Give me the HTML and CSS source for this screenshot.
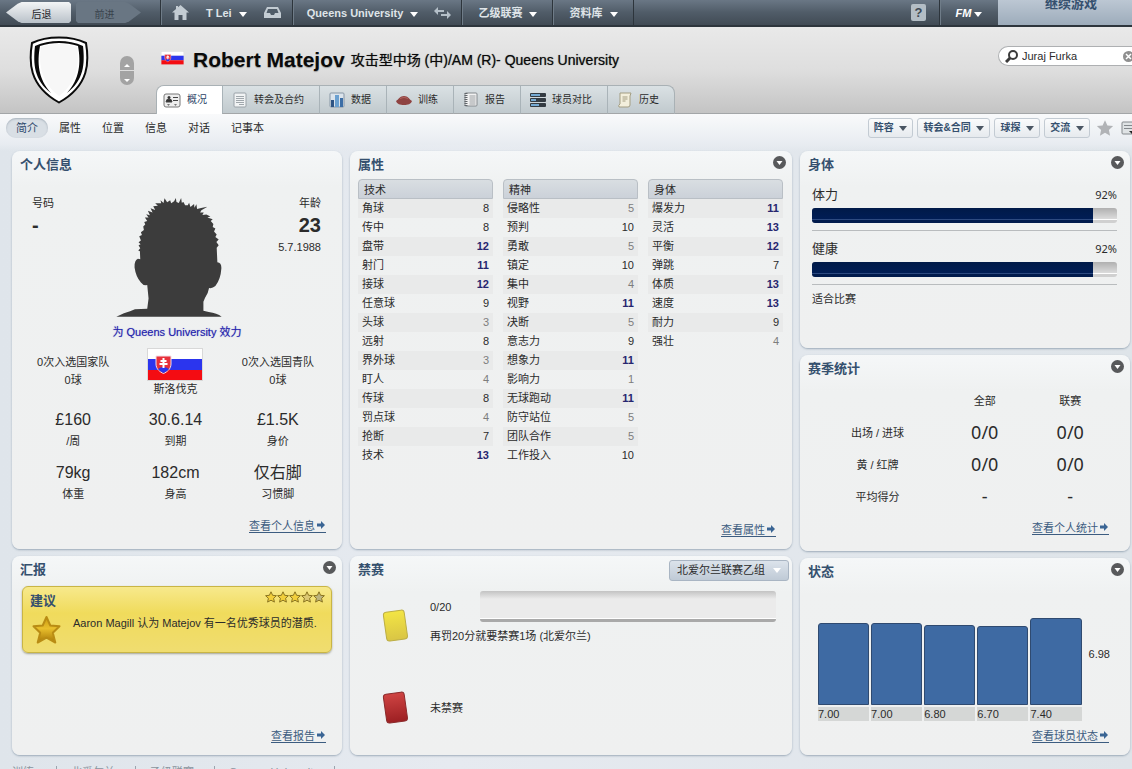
FILE: index.html
```html
<!DOCTYPE html>
<html lang="zh-CN">
<head>
  <meta charset="UTF-8">
  <meta name="viewport" content="width=device-width, initial-scale=1.0">
  <title>Robert Matejov - 概况</title>
  <link rel="stylesheet" href="styles.css">
</head>
<body>
  <!-- shared shapes -->
  <svg class="defs" width="0" height="0" aria-hidden="true">
    <defs>
      <linearGradient id="gold" x1="0" y1="0" x2="0" y2="1">
        <stop offset="0" stop-color="#c99a10"/>
        <stop offset="0.45" stop-color="#e9bf2c"/>
        <stop offset="1" stop-color="#a87806"/>
      </linearGradient>
      <linearGradient id="yellowCard" x1="0" y1="0" x2="0" y2="1">
        <stop offset="0" stop-color="#f3e544"/>
        <stop offset="1" stop-color="#d9c545"/>
      </linearGradient>
      <linearGradient id="redCard" x1="0" y1="0" x2="0" y2="1">
        <stop offset="0" stop-color="#cf4443"/>
        <stop offset="1" stop-color="#9c1f22"/>
      </linearGradient>
      <symbol id="flag" viewBox="0 0 56 33">
        <rect width="56" height="33" fill="#d8d8d8"/>
        <rect x="1" y="1" width="54" height="10" fill="#fff"/>
        <rect x="1" y="11" width="54" height="11" fill="#2b35ee"/>
        <rect x="1" y="22" width="54" height="10" fill="#f40c12"/>
        <path d="M9 8h15v8c0 5-4 8-7.500 9.500C13 24 9 21 9 16z" fill="#e8303a" stroke="#f3dfe6"/>
        <path d="M11 21q5-4 11 0-2 2.500-5.500 4Q13 23.500 11 21z" fill="#2b35ee"/>
        <path d="M16.500 10v10M13.500 13h6M12.500 16h8" stroke="#fff" stroke-width="2"/>
      </symbol>
      <symbol id="star" viewBox="0 0 12 12">
        <path d="M6 .8l1.600 3.500 3.800.4-2.800 2.600.8 3.800L6 9.200l-3.400 1.900.8-3.800L.6 4.700l3.800-.4z"/>
      </symbol>
      <symbol id="more" viewBox="0 0 13 13">
        <circle cx="6.500" cy="6.500" r="6.500" fill="#58595b"/>
        <path d="M3.500 5h6l-3 4z" fill="#fff"/>
      </symbol>
      <symbol id="arrow" viewBox="0 0 8 8">
        <path d="M0 2.500h4V0l4 4-4 4V5.500H0z" fill="#3a6594"/>
      </symbol>
    </defs>
  </svg>

  <nav class="topbar">
    <div class="history">
      <button type="button" class="back">后退</button>
      <button type="button" class="forward" disabled>前进</button>
    </div>
    <div class="menu menu-user">
      <svg width="17" height="15" viewBox="0 0 17 15"><path d="M8.500 0L17 7.500h-2.500V15h-4v-5h-4v5h-4V7.500H0L4 4V1h2v1.200z" fill="#c3ccd3"/></svg>
      <button type="button">T Lei <span class="caret"></span></button>
      <svg width="17" height="11" viewBox="0 0 17 11"><path d="M3 0h11l3 6v5H0V6z" fill="#c3ccd3"/><path d="M4 2h9l1.500 4H11L10 8H7L6 6H2.500z" fill="#4f5c68"/></svg>
    </div>
    <div class="menu menu-club">
      <button type="button">Queens University <span class="caret"></span></button>
      <svg width="17" height="12" viewBox="0 0 17 12"><path d="M0 4l4-4v3h6v2H4v3zM17 8l-4-4v3H7v2h6v3z" fill="#b5c0c9"/></svg>
    </div>
    <div class="menu"><button type="button">乙级联赛 <span class="caret"></span></button></div>
    <div class="menu menu-last"><button type="button">资料库 <span class="caret"></span></button></div>
    <button type="button" class="help">?</button>
    <button type="button" class="fm"><i>FM</i> <span class="caret"></span></button>
    <button type="button" class="continue">继续游戏</button>
  </nav>

  <header class="header">
    <div class="crest">
      <svg width="62" height="68" viewBox="0 0 62 68">
        <path d="M31 1.500C40 1.500 51 3.500 58 7c3 18 4 42-27 59.500C0 49 1 25 4 7 11 3.500 22 1.500 31 1.500z" fill="#fff" stroke="#0a0a0a" stroke-width="2"/>
        <path d="M31 5c8 0 17 1.500 24 5 2 18 1 34-16 47C52 43 53 26 50 10 44 8 37 7 31 7S18 8 12 10C9 26 10 43 23 57 6 44 5 28 7 10 14 6.500 23 5 31 5z" fill="#0a0a0a"/>
        <path d="M31 8c6 0 12 1 18 3 3 18-1 36-18 49C14 47 10 29 13 11c6-2 12-3 18-3z" fill="#f7f7f7"/>
      </svg>
      <div class="stepper">
        <button type="button" aria-label="上一个"><span class="caret up"></span></button>
        <button type="button" aria-label="下一个"><span class="caret"></span></button>
      </div>
    </div>
    <div class="identity">
      <div class="title-row">
        <svg class="title-flag" width="23" height="14"><use href="#flag"/></svg>
        <h1>Robert Matejov</h1>
        <p>攻击型中场 (中)/AM (R)- Queens University</p>
        <div class="search">
          <svg width="13" height="13" viewBox="0 0 13 13"><circle cx="8" cy="5" r="4" fill="none" stroke="#3b3b3b" stroke-width="2"/><path d="M5 8l-4 4" stroke="#3b3b3b" stroke-width="3"/></svg>
          <input type="text" value="Juraj Furka" aria-label="搜索">
          <button type="button" aria-label="清除">
            <svg width="11" height="11" viewBox="0 0 11 11"><circle cx="5.500" cy="5.500" r="5.500" fill="#8f8f8f"/><path d="M3 3l5 5M8 3l-5 5" stroke="#fff" stroke-width="1.500"/></svg>
          </button>
        </div>
      </div>
      <div class="tabs">
        <a href="#" class="tab active">
          <svg width="18" height="15" viewBox="0 0 18 15"><rect x="1" y="1" width="16" height="13" rx="2" fill="#eee" stroke="#777"/><circle cx="6" cy="4.500" r="1.500" fill="#333"/><path d="M3 9q0-3 3-3t3 3zM10 4.500h5M10 7.500h5" fill="#333" stroke="#444"/><path d="M4 11h3l-1.500 2zM11 11h3l-1.500 2z" fill="#777"/></svg>
          概况</a>
        <a href="#" class="tab">
          <svg width="16" height="16" viewBox="0 0 16 16"><rect x="2" y="1" width="12" height="14" rx="1" fill="#f1f3f4" stroke="#9aa2a8"/><path d="M4 4.500h8M4 6.500h8M4 8.500h8M4 10.500h8M7 12.500h5" stroke="#a0a7ac"/></svg>
          转会及合约</a>
        <a href="#" class="tab">
          <svg width="16" height="16" viewBox="0 0 16 16"><rect x="1" y="1" width="14" height="14" rx="1" fill="#dbe4ec" stroke="#8796a5"/><path d="M2 8h3v7H2z" fill="#2f5585"/><path d="M6 3h4v12H6z" fill="#6aa0d0"/><path d="M11 6h3v9h-3z" fill="#3c6ea6"/></svg>
          数据</a>
        <a href="#" class="tab">
          <svg width="16" height="12" viewBox="0 0 16 12"><path d="M0 7C3 5 4 2 8 2s5 3 8 5c-1 3-4 4-8 4S1 10 0 7z" fill="#8f4341"/><path d="M4 4.500Q8 2 12 4.500" stroke="#b0625d" fill="none"/></svg>
          训练</a>
        <a href="#" class="tab">
          <svg width="16" height="16" viewBox="0 0 16 16"><rect x="2" y="1" width="12" height="13" rx="1" fill="#f2f2f2" stroke="#84898d"/><path d="M3 1v13" stroke="#62676b" stroke-width="3" stroke-dasharray="1 1"/><path d="M6.500 4h6M6.500 6h6M6.500 8h6M6.500 10h6M6.500 12h6" stroke="#9b9fa2"/></svg>
          报告</a>
        <a href="#" class="tab">
          <svg width="16" height="16" viewBox="0 0 16 16"><rect y="1" width="16" height="4" rx="1" fill="#333b42"/><rect y="6" width="16" height="4" rx="1" fill="#333b42"/><rect y="11" width="16" height="4" rx="1" fill="#333b42"/><path d="M1 2h9v2H1zM1 7h5v2H1zM1 12h8v2H1z" fill="#74a9d2"/></svg>
          球员对比</a>
        <a href="#" class="tab">
          <svg width="16" height="16" viewBox="0 0 16 16"><path d="M3 1h11l-1 3v9q0 2-2 2H2q-1-2 1-3z" fill="#f3efdc" stroke="#a39d82"/><path d="M5.500 5h5M5.500 7h5M5.500 9h3" stroke="#a39d82"/></svg>
          历史</a>
      </div>
    </div>
  </header>

  <div class="subnav">
    <a href="#" class="active">简介</a>
    <a href="#">属性</a>
    <a href="#">位置</a>
    <a href="#">信息</a>
    <a href="#">对话</a>
    <a href="#">记事本</a>
    <div class="actions">
      <button type="button">阵容 <span class="caret"></span></button>
      <button type="button">转会&amp;合同 <span class="caret"></span></button>
      <button type="button">球探 <span class="caret"></span></button>
      <button type="button">交流 <span class="caret"></span></button>
      <svg class="favourite" width="18" height="18" viewBox="0 0 12 12" fill="#b1b3b6"><use href="#star"/></svg>
      <svg width="11" height="14" viewBox="0 0 11 14"><path d="M11 1H2Q1 1 1 2v10q0 1 1 1h9" fill="#dfe3e5" stroke="#84898d"/><path d="M3 4.500h8M3 7.500h8" stroke="#84898d"/><path d="M8 10h3v3z" fill="#222"/></svg>
    </div>
  </div>

  <main class="dashboard">
    <div class="column split">
      <section class="panel">
        <div class="panel-head"><h2>个人信息</h2></div>
        <div class="portrait-row">
          <div class="number">
            <span>号码</span>
            <strong>-</strong>
          </div>
          <svg class="portrait" width="106" height="120" viewBox="347 155 317 361">
            <path d="M347 515L370 505Q390 499 403 493L440 491 444 460 440 420Q428 422 421 412 406 396 402 368 401 345 412 341L419 342 418 318 413 316 419 309 414 300 420 297 414 291 421 286 416 273 424 269 421 261 430 254 428 244 434 238 431 230 440 227 433 217 444 217 437 207 448 210 442 196 456 202 450 189 464 194 458 183 472 181 464 174 482 174 480 165 489 173 492 159 500 171 509 165 512 174 521 168 526 158 528 170 535 173 542 158 544 172 549 170 554 180 562 180 566 172 570 185 581 176 582 187 588 177 590 191 602 188 621 184 603 195 599 202 610 202 606 209 618 208 630 214 621 217 637 222 631 227 639 236 637 245 645 250 641 259 649 268 645 275 655 283 648 290 655 300 649 308 651 351Q664 352 663 370 661 402 645 423 636 431 626 429 624 444 614 458L609 470 609 497 625 501Q650 505 664 515z" fill="#3c3c3c"/>
          </svg>
          <div class="age">
            <span>年龄</span>
            <strong>23</strong>
            <span>5.7.1988</span>
          </div>
        </div>
        <p class="club">为 Queens University 效力</p>
        <div class="caps">
          <div>0次入选国家队<br>0球</div>
          <div class="nation">
            <svg width="56" height="33"><use href="#flag"/></svg>
            <span>斯洛伐克</span>
          </div>
          <div>0次入选国青队<br>0球</div>
        </div>
        <dl class="facts">
          <div><dd>£160</dd><dt>/周</dt></div>
          <div><dd>30.6.14</dd><dt>到期</dt></div>
          <div><dd>£1.5K</dd><dt>身价</dt></div>
          <div><dd>79kg</dd><dt>体重</dt></div>
          <div><dd>182cm</dd><dt>身高</dt></div>
          <div><dd>仅右脚</dd><dt>习惯脚</dt></div>
        </dl>
        <a href="#" class="view-link raised">查看个人信息 <svg width="8" height="8"><use href="#arrow"/></svg></a>
      </section>

      <section class="panel">
        <div class="panel-head">
          <h2>汇报</h2>
          <button type="button" class="more" aria-label="更多"><svg width="13" height="13"><use href="#more"/></svg></button>
        </div>
        <div class="note">
          <div class="note-head">
            <h3>建议</h3>
            <svg width="60" height="12" viewBox="0 0 60 12" fill="#f2cf3c" stroke="#8a7420">
              <use href="#star" width="12" height="12"/>
              <use href="#star" x="12" width="12" height="12"/>
              <use href="#star" x="24" width="12" height="12"/>
              <use href="#star" x="36" width="12" height="12" fill="#dcc873"/>
              <use href="#star" x="48" width="12" height="12" fill="#bdb47f"/>
            </svg>
          </div>
          <div class="note-body">
            <svg width="31" height="30" viewBox="0 0 31 30"><path d="M15.500 2l3.800 8.500 9.200.8-6.700 6.400 2.500 9.800-8.800-4.800-8.800 4.800 2.500-9.800-6.700-6.400 9.200-.8z" fill="url(#gold)" stroke="#b98c14" stroke-width="2" stroke-linejoin="round"/></svg>
            <p>Aaron Magill 认为 Matejov 有一名优秀球员的潜质.</p>
          </div>
        </div>
        <a href="#" class="view-link">查看报告 <svg width="8" height="8"><use href="#arrow"/></svg></a>
      </section>
    </div>

    <div class="column split">
      <section class="panel">
        <div class="panel-head">
          <h2>属性</h2>
          <button type="button" class="more" aria-label="更多"><svg width="13" height="13"><use href="#more"/></svg></button>
        </div>
        <div class="attributes">
          <table>
            <thead><tr><th colspan="2">技术</th></tr></thead>
            <tbody>
              <tr><td>角球</td><td>8</td></tr>
              <tr><td>传中</td><td>8</td></tr>
              <tr><td>盘带</td><td class="good">12</td></tr>
              <tr><td>射门</td><td class="good">11</td></tr>
              <tr><td>接球</td><td class="good">12</td></tr>
              <tr><td>任意球</td><td>9</td></tr>
              <tr><td>头球</td><td class="low">3</td></tr>
              <tr><td>远射</td><td>8</td></tr>
              <tr><td>界外球</td><td class="low">3</td></tr>
              <tr><td>盯人</td><td class="low">4</td></tr>
              <tr><td>传球</td><td>8</td></tr>
              <tr><td>罚点球</td><td class="low">4</td></tr>
              <tr><td>抢断</td><td>7</td></tr>
              <tr><td>技术</td><td class="good">13</td></tr>
            </tbody>
          </table>
          <table>
            <thead><tr><th colspan="2">精神</th></tr></thead>
            <tbody>
              <tr><td>侵略性</td><td class="low">5</td></tr>
              <tr><td>预判</td><td>10</td></tr>
              <tr><td>勇敢</td><td class="low">5</td></tr>
              <tr><td>镇定</td><td>10</td></tr>
              <tr><td>集中</td><td class="low">4</td></tr>
              <tr><td>视野</td><td class="good">11</td></tr>
              <tr><td>决断</td><td class="low">5</td></tr>
              <tr><td>意志力</td><td>9</td></tr>
              <tr><td>想象力</td><td class="good">11</td></tr>
              <tr><td>影响力</td><td class="low">1</td></tr>
              <tr><td>无球跑动</td><td class="good">11</td></tr>
              <tr><td>防守站位</td><td class="low">5</td></tr>
              <tr><td>团队合作</td><td class="low">5</td></tr>
              <tr><td>工作投入</td><td>10</td></tr>
            </tbody>
          </table>
          <table>
            <thead><tr><th colspan="2">身体</th></tr></thead>
            <tbody>
              <tr><td>爆发力</td><td class="good">11</td></tr>
              <tr><td>灵活</td><td class="good">13</td></tr>
              <tr><td>平衡</td><td class="good">12</td></tr>
              <tr><td>弹跳</td><td>7</td></tr>
              <tr><td>体质</td><td class="good">13</td></tr>
              <tr><td>速度</td><td class="good">13</td></tr>
              <tr><td>耐力</td><td>9</td></tr>
              <tr><td>强壮</td><td class="low">4</td></tr>
            </tbody>
          </table>
        </div>
        <a href="#" class="view-link">查看属性 <svg width="8" height="8"><use href="#arrow"/></svg></a>
      </section>

      <section class="panel">
        <div class="panel-head">
          <h2>禁赛</h2>
          <select class="competition" aria-label="赛事">
            <option>北爱尔兰联赛乙组</option>
          </select>
        </div>
        <div class="suspensions">
          <div class="suspension">
            <svg width="32" height="36" viewBox="0 0 32 36"><rect x="5" y="3" width="21" height="29" rx="3" transform="rotate(-8 16 18)" fill="url(#yellowCard)" stroke="#bcae45"/></svg>
            <div class="suspension-info">
              <div class="points"><span>0/20</span><div class="points-track"></div></div>
              <p>再罚20分就要禁赛1场 (北爱尔兰)</p>
            </div>
          </div>
          <div class="suspension">
            <svg width="32" height="36" viewBox="0 0 32 36"><rect x="5" y="3" width="21" height="29" rx="3" transform="rotate(-8 16 18)" fill="url(#redCard)" stroke="#8b2a2b"/></svg>
            <p>未禁赛</p>
          </div>
        </div>
      </section>
    </div>

    <div class="column">
      <section class="panel">
        <div class="panel-head">
          <h2>身体</h2>
          <button type="button" class="more" aria-label="更多"><svg width="13" height="13"><use href="#more"/></svg></button>
        </div>
        <div class="condition">
          <div class="meter">
            <div class="meter-label"><h3>体力</h3><span>92%</span></div>
            <div class="meter-track"><div class="meter-fill" style="width: 92%"></div></div>
          </div>
          <div class="meter">
            <div class="meter-label"><h3>健康</h3><span>92%</span></div>
            <div class="meter-track"><div class="meter-fill" style="width: 92%"></div></div>
          </div>
          <p>适合比赛</p>
        </div>
      </section>

      <section class="panel">
        <div class="panel-head">
          <h2>赛季统计</h2>
          <button type="button" class="more" aria-label="更多"><svg width="13" height="13"><use href="#more"/></svg></button>
        </div>
        <table class="season">
          <thead><tr><td></td><th>全部</th><th>联赛</th></tr></thead>
          <tbody>
            <tr><th>出场 / 进球</th><td>0/0</td><td>0/0</td></tr>
            <tr><th>黄 / 红牌</th><td>0/0</td><td>0/0</td></tr>
            <tr><th>平均得分</th><td>-</td><td>-</td></tr>
          </tbody>
        </table>
        <a href="#" class="view-link raised inset">查看个人统计 <svg width="8" height="8"><use href="#arrow"/></svg></a>
      </section>

      <section class="panel">
        <div class="panel-head">
          <h2>状态</h2>
          <button type="button" class="more" aria-label="更多"><svg width="13" height="13"><use href="#more"/></svg></button>
        </div>
        <div class="form-chart">
          <div class="bars">
            <div class="bar-slot"><div class="bar" style="height: 70%"></div></div>
            <div class="bar-slot"><div class="bar" style="height: 70%"></div></div>
            <div class="bar-slot"><div class="bar" style="height: 68%"></div></div>
            <div class="bar-slot"><div class="bar" style="height: 67%"></div></div>
            <div class="bar-slot"><div class="bar" style="height: 74%"></div></div>
            <span>7.00</span><span>7.00</span><span>6.80</span><span>6.70</span><span>7.40</span>
          </div>
          <div class="average">6.98</div>
        </div>
        <a href="#" class="view-link inset">查看球员状态 <svg width="8" height="8"><use href="#arrow"/></svg></a>
      </section>
    </div>
  </main>

  <footer class="footer">
    <a href="#">训练</a>
    <a href="#">北爱尔兰</a>
    <a href="#">乙级联赛</a>
    <a href="#" class="wide">Queens University</a>
  </footer>
</body>
</html>
```

FILE: styles.css
```css
* {
  box-sizing: border-box;
  margin: 0;
  padding: 0;
}

body {
  display: flex;
  flex-direction: column;
  height: 100vh;
  overflow: hidden;
  font-family: "Liberation Sans", "Noto Sans CJK SC", sans-serif;
  font-size: 11px;
  line-height: 16px;
  color: #2b2b2b;
  background: linear-gradient(to right, #dfe5eb, #e6eaf0 40%, #dee4e9);
}

button,
input,
select {
  font: inherit;
  color: inherit;
  border: none;
  background: none;
}

button {
  cursor: pointer;
}

a {
  color: inherit;
  text-decoration: none;
}

svg {
  display: block;
  flex-shrink: 0;
}

.defs {
  position: absolute;
}

.caret {
  display: inline-block;
  border: 4px solid transparent;
  border-top: 5px solid currentColor;
  border-bottom: none;
}

.caret.up {
  border-top: none;
  border-bottom: 5px solid currentColor;
}

/* top bar */

.topbar {
  display: flex;
  flex: 0 0 27px;
  overflow: hidden;
  color: #dfe4e8;
  font-weight: bold;
  background: linear-gradient(#6a7785, #505c68 50%, #414b55);
  border-bottom: 2px solid #2d353c;
}

.topbar button {
  white-space: nowrap;
}

.history {
  display: flex;
  gap: 5px;
  width: 160px;
  padding: 2px 0 2px 6px;
}

.history button {
  width: 65px;
  padding-top: 4px;
  font-size: 10px;
  font-weight: normal;
}

.history .back {
  padding-left: 6px;
  color: #1e2328;
  background: linear-gradient(#f3f5f6, #b9c1c9);
  clip-path: polygon(0 50%, 18% 8%, 24% 0, 97% 0, 100% 10%, 100% 90%, 97% 100%, 24% 100%, 18% 92%);
}

.history .forward {
  padding-right: 8px;
  color: #38424c;
  background: #697683;
  clip-path: polygon(0 10%, 3% 0, 76% 0, 82% 8%, 100% 50%, 82% 92%, 76% 100%, 3% 100%, 0 90%);
}

.menu {
  display: flex;
  align-items: center;
  gap: 16px;
  padding: 0 15px 0 16px;
  border-left: 1px solid #2d353c;
  box-shadow: inset 1px 0 #6f7c88;
}

.topbar .caret {
  margin-left: 4px;
  color: #fff;
}

.menu-user {
  gap: 17px;
  padding: 0 11px;
}

.menu-club {
  padding: 0 10px 0 14px;
}

.menu-last {
  margin-right: auto;
  border-right: 1px solid #2d353c;
}

.help {
  align-self: center;
  width: 15px;
  height: 17px;
  margin-right: 13px;
  border-radius: 2px;
  font-size: 13px;
  color: #3e4954;
  background: #b3bdc5;
}

.fm {
  width: 59px;
  color: #fff;
  border-left: 1px solid #2d353c;
  box-shadow: inset 1px 0 #6f7c88;
}

.topbar .fm .caret {
  margin-left: 0;
}

.continue {
  width: 134px;
  padding: 0 0 18px 12px;
  color: #35506e;
  font-size: 13px;
  line-height: 8px;
  background: linear-gradient(#bcc7d3, #9dacbb);
}

/* player header */

.header {
  display: flex;
  flex: 0 0 86px;
  background: linear-gradient(#e9e9e9, #dedede 50%, #c4c4c4);
  border-bottom: 1px solid #a3a6a8;
}

.crest {
  display: flex;
  align-items: center;
  gap: 30px;
  width: 156px;
  padding-left: 28px;
}

.stepper {
  display: flex;
  flex-direction: column;
  gap: 1px;
  width: 14px;
}

.stepper button {
  height: 14px;
  line-height: 8px;
  color: #fff;
  background: #a3a3a3;
  border-radius: 0 0 7px 7px;
}

.stepper button:first-child {
  border-radius: 7px 7px 0 0;
}

.stepper .caret {
  border-width: 3px;
  border-bottom: none;
}

.stepper .caret.up {
  border-top: none;
  border-bottom: 3px solid currentColor;
}

.identity {
  display: flex;
  flex: 1;
  flex-direction: column;
  justify-content: space-between;
  min-width: 0;
}

.title-row {
  display: flex;
  align-items: center;
  height: 58px;
  padding: 8px 0 0 5px;
  white-space: nowrap;
}

h1 {
  margin: 0 6px 0 9px;
  font-size: 21px;
  line-height: 24px;
  color: #0a0a0a;
  text-shadow: 0 1px 1px rgba(0, 0, 0, 0.3);
}

.title-row p {
  font-size: 14px;
  color: #0a0a0a;
  text-shadow: 0 0 1px rgba(0, 0, 0, 0.6);
}

.title-flag {
  margin-bottom: 5px;
}

.search {
  display: flex;
  align-items: center;
  gap: 4px;
  width: 134px;
  height: 20px;
  margin: 0 0 8px auto;
  padding-left: 6px;
  background: #fff;
  border: 1px solid #aeb0b2;
  border-right: none;
  border-radius: 10px 0 0 10px;
}

.search input {
  flex: 1;
  min-width: 0;
}

.search button {
  width: 9px;
  overflow: hidden;
}

.tabs {
  display: flex;
  align-self: flex-start;
  height: 29px;
  margin-bottom: -1px;
  overflow: hidden;
  font-size: 10px;
  border: 1px solid #a9b1b5;
  border-bottom: none;
  border-radius: 8px 8px 0 0;
  background: linear-gradient(#dae1e4, #c0c9cd);
}

.tab {
  display: flex;
  align-items: center;
  gap: 6px;
  padding: 0 15px 0 9px;
  border-bottom: 1px solid #a3a6a8;
  border-left: 1px solid #a9b3b8;
}

.tab.active {
  padding-left: 6px;
  color: #2c3f66;
  background: #fff;
  border: none;
}

/* section links */

.subnav {
  display: flex;
  flex: 0 0 37px;
  align-items: flex-start;
  gap: 1px;
  padding: 4px 0 0 6px;
  background: linear-gradient(#f9fafb, #e8ecf1 30px, rgba(232, 236, 241, 0));
}

.subnav a {
  padding: 2px 10px;
  border-radius: 10px;
}

.subnav a.active {
  color: #2f4a6d;
  background: #d9dfe5;
  box-shadow: inset 0 1px 2px #a9b3bd;
}

.actions {
  display: flex;
  align-items: center;
  gap: 4px;
  margin-left: auto;
}

.actions button {
  height: 20px;
  padding: 0 5px;
  color: #35506e;
  font-size: 10px;
  font-weight: bold;
  background: linear-gradient(#fafbfc, #e6eaee);
  border: 1px solid #c3cbd3;
  border-radius: 3px;
}

.actions .caret {
  margin-left: 3px;
  color: #4a5663;
}

.favourite {
  margin: 0 3px 0 2px;
}

/* panels */

.dashboard {
  display: grid;
  flex: 1;
  grid-template-columns: 330fr 442fr 330fr;
  gap: 8px;
  min-height: 0;
  padding: 0 2px 0 12px;
}

.column {
  display: grid;
  grid-template-rows: repeat(3, 1fr);
  gap: 7px;
}

.column.split {
  grid-template-rows: 2fr 1fr;
}

.panel {
  display: flex;
  flex-direction: column;
  min-height: 0;
  padding: 2px 0 12px;
  background: linear-gradient(#f5f7f8, #eff1f1 36px, #eff0f0);
  border-radius: 8px;
  box-shadow: 0 1px 2px rgba(110, 130, 150, 0.6);
}

.panel-head {
  display: flex;
  align-items: center;
  justify-content: space-between;
  height: 24px;
  padding: 0 3px 0 8px;
}

h2,
.note h3 {
  font-size: 13px;
  line-height: 24px;
  color: #35506e;
}

.more {
  align-self: flex-start;
  margin: 3px 3px 0 0;
}

.view-link {
  display: flex;
  align-items: center;
  align-self: flex-end;
  gap: 2px;
  margin: auto 16px 0 0;
  padding-right: 1px;
  line-height: 12px;
  color: #3c5c80;
  border-bottom: 1px solid #3c5c80;
}

.view-link svg {
  margin-bottom: 3px;
}

.view-link.raised {
  margin-bottom: 4px;
}

.view-link.inset {
  margin-right: 21px;
}

/* personal details */

.portrait-row {
  display: flex;
  justify-content: space-between;
  padding: 18px 21px 0 20px;
}

.portrait {
  margin: 2px 16px 0 0;
}

.number,
.age {
  display: flex;
  flex-direction: column;
  width: 58px;
}

.age {
  text-align: right;
}

.number strong,
.age strong {
  font-size: 20px;
  line-height: 28px;
}

.club {
  margin-top: 7px;
  text-align: center;
  color: #2323ad;
  text-shadow: 0 0 1px rgba(35, 35, 173, 0.5);
}

.caps,
.facts {
  display: grid;
  grid-template-columns: repeat(3, 1fr);
  padding: 0 13px 0 10px;
  text-align: center;
}

.caps {
  margin-top: 8px;
}

.caps > div {
  padding-top: 5px;
  line-height: 18px;
}

.caps .nation {
  display: flex;
  flex-direction: column;
  align-items: center;
  padding-top: 0;
  line-height: 16px;
}

.facts {
  margin-top: 10px;
  row-gap: 10px;
}

.facts > div {
  display: flex;
  flex-direction: column;
}

.facts dd {
  font-size: 16px;
  line-height: 25px;
}

.facts dt {
  line-height: 18px;
}

/* scout note */

.note {
  height: 67px;
  margin: 4px 10px 0;
  padding: 2px 6px 0 7px;
  background: linear-gradient(#f7e98c, #f0db5c 40%, #f0dd70);
  border: 1px solid #c9b545;
  border-radius: 6px;
  box-shadow: 0 1px 2px rgba(90, 90, 60, 0.5);
}

.note-head {
  display: flex;
  justify-content: space-between;
}

.note-head svg {
  margin-top: 2px;
}

.note-body {
  display: flex;
  gap: 11px;
  margin: 2px 0 0 1px;
}

/* attribute tables */

.attributes {
  display: grid;
  grid-template-columns: repeat(3, 1fr);
  align-items: start;
  gap: 10px;
  margin-top: 2px;
  padding: 0 9px 0 8px;
}

.attributes table {
  border-spacing: 0;
}

.attributes th {
  height: 19px;
  padding: 2px 5px 0;
  line-height: 16px;
  font-weight: normal;
  text-align: left;
  background: linear-gradient(#d9dee2, #cbd1d9);
  border: 1px solid #b9bfc5;
  border-radius: 4px 4px 0 0;
}

.attributes td {
  padding: 0 4px;
  line-height: 19px;
}

.attributes td:last-child {
  text-align: right;
}

.attributes tbody tr:nth-child(odd) {
  background: #e9eaea;
}

.attributes .good {
  color: #26266f;
  font-weight: bold;
}

.attributes .low {
  color: #7d7d7d;
}

/* suspensions */

.competition {
  height: 21px;
  padding: 0 23px 0 7px;
  appearance: none;
  border: 1px solid #a9b5c3;
  border-radius: 3px;
  background:
    url("data:image/svg+xml,%3Csvg xmlns='http://www.w3.org/2000/svg' width='8' height='5'%3E%3Cpath d='M0 0h8L4 5z' fill='white'/%3E%3C/svg%3E") no-repeat right 7px center,
    linear-gradient(#dce3eb, #bfcad6);
}

.suspensions {
  display: flex;
  flex-direction: column;
  gap: 12px;
  margin-top: 9px;
  padding: 0 16px 0 30px;
}

.suspension {
  display: flex;
  align-items: center;
  gap: 18px;
  height: 70px;
}

.suspension-info {
  flex: 1;
  align-self: flex-start;
}

.points {
  display: flex;
  align-items: center;
  margin-bottom: 6px;
}

.points span {
  width: 50px;
}

.points-track {
  flex: 1;
  height: 31px;
  background: linear-gradient(#c3c3c3, #ebebeb 8px);
  border-bottom: 3px solid #a9a9a9;
  border-radius: 3px;
  box-shadow: inset 0 -1px #fff;
}

/* condition */

.condition {
  padding: 0 13px 0 12px;
}

.condition p {
  margin-top: 6px;
}

.meter {
  padding-bottom: 7px;
  border-bottom: 1px solid #b9bcbe;
}

.meter-label {
  display: flex;
  justify-content: space-between;
  height: 31px;
  padding-top: 6px;
  line-height: 24px;
}

.meter-label h3 {
  font-size: 13px;
  font-weight: normal;
}

.meter-label span,
.season td {
  font-family: "Noto Sans", "Noto Sans CJK SC", sans-serif;
}

.meter-track {
  height: 15px;
  overflow: hidden;
  border-radius: 3px;
  background: linear-gradient(#b0b0b0, #dcdcdc 11px, #fff 11px, #fff 12px, #d0d0d0 12px);
}

.meter-fill {
  height: 100%;
  background: linear-gradient(#001a48, #001d55 11px, #2d4a80 11px, #2d4a80 12px, #001a4c 12px);
}

/* season stats */

.season {
  margin: 5px 17px 0 13px;
  table-layout: fixed;
  border-spacing: 0;
  text-align: center;
}

.season tr > :first-child {
  width: 43%;
}

.season th,
.season td {
  height: 32px;
  padding-bottom: 2px;
  font-weight: normal;
}

.season tbody td {
  padding-bottom: 3px;
  font-size: 18px;
}

/* form chart */

.form-chart {
  display: flex;
  align-items: center;
  gap: 7px;
  margin: 3px 20px 0 18px;
}

.bars {
  display: grid;
  flex: 1;
  grid-template-rows: 118px 14px;
  grid-template-columns: repeat(5, 1fr);
  gap: 2px;
}

.bar-slot {
  display: flex;
  align-items: flex-end;
}

.bar {
  flex: 1;
  background: #3e6aa3;
  border: 1px solid #2f4a70;
  border-radius: 3px 3px 0 0;
}

.bars span {
  line-height: 14px;
  background: #d5d7d6;
}

/* bottom links, mostly below the fold */

.footer {
  display: flex;
  flex: 0 0 14px;
  padding: 11px 0 0 12px;
  overflow: hidden;
  line-height: 13px;
  color: #8a949e;
}

.footer a {
  min-width: 79px;
  padding-left: 14px;
  border-right: 1px solid #9aa4ae;
}

.footer a:first-child {
  min-width: 45px;
  padding-left: 0;
}

.footer .wide {
  min-width: 120px;
}
```
